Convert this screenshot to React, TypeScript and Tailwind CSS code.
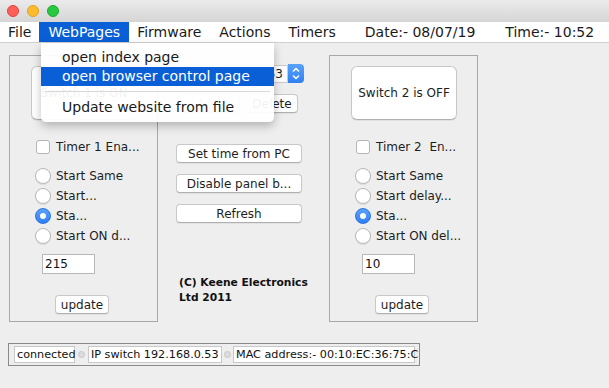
import React from 'react';

const font = { fontFamily: '"DejaVu Sans", "Noto Sans", sans-serif' };

const Radio = ({ checked, label }: { checked?: boolean; label: string }) => (
  <div className="flex items-center h-[20px]">
    {checked ? (
      <span className="w-[16px] h-[16px] rounded-full bg-gradient-to-b from-[#5aa2f8] to-[#2f7ff3] border border-[#2a73e0] flex items-center justify-center">
        <span className="w-[6px] h-[6px] rounded-full bg-white" />
      </span>
    ) : (
      <span className="w-[16px] h-[16px] rounded-full bg-white border border-[#b8b8b8] shadow-[0_1px_1px_rgba(0,0,0,0.08)]" />
    )}
    <span className="ml-[5px] text-[12px] text-[#1e1e1e]">{label}</span>
  </div>
);

const Btn = ({ children, className }: { children: React.ReactNode; className?: string }) => (
  <div
    className={`bg-white border border-[#c8c8c8] border-b-[#b0b0b0] rounded-[4px] shadow-[0_1px_1px_rgba(0,0,0,0.06)] flex items-center justify-center text-[12px] text-[#1e1e1e] whitespace-nowrap ${className ?? ''}`}
  >
    {children}
  </div>
);

const Panel = ({
  sw,
  timer,
  radios,
  value,
}: {
  sw: string;
  timer: string;
  radios: string[];
  value: string;
}) => (
  <div className="w-[149px] h-[267px] border border-[#a8a8a8] flex flex-col">
    <Btn className="ml-[21px] mt-[10px] w-[106px] h-[54px] rounded-[6px] text-[12.5px]">{sw}</Btn>
    <div className="flex items-center ml-[26px] mt-[20px] h-[14px]">
      <span className="w-[14px] h-[14px] bg-white border border-[#b5b5b5] rounded-[3px]" />
      <span className="ml-[6px] text-[12px] text-[#1e1e1e] whitespace-pre">{timer}</span>
    </div>
    <div className="ml-[25px] mt-[12px] flex flex-col">
      <Radio label={radios[0]} />
      <Radio label={radios[1]} />
      <Radio checked label={radios[2]} />
      <Radio label={radios[3]} />
    </div>
    <div className="ml-[32px] mt-[8px] w-[53px] h-[20px] bg-white border border-[#b8b8b8] text-[12px] leading-[18px] pl-[2px] text-[#111]">
      {value}
    </div>
    <Btn className="ml-[45px] mt-[21px] w-[54px] h-[19px]">update</Btn>
  </div>
);

const App = () => {
  return (
    <div className="w-[609px] h-[388px] bg-[#eeeeee] relative overflow-hidden" style={font}>
      {/* title bar */}
      <div className="h-[22px] bg-gradient-to-b from-[#ebebeb] to-[#d5d5d5] flex items-center pl-[7px] gap-[8px]">
        <span className="w-[12px] h-[12px] rounded-full bg-[#fc5f57] border border-[#e0443e]" />
        <span className="w-[12px] h-[12px] rounded-full bg-[#fdbc2e] border border-[#dea123]" />
        <span className="w-[12px] h-[12px] rounded-full bg-[#28c840] border border-[#1aab29]" />
      </div>

      {/* menu bar */}
      <div className="h-[21px] bg-white border-b border-[#d0d0d0] flex items-center text-[14px] text-[#1a1a1a]">
        <span className="pl-[8px] pr-[8px]">File</span>
        <span className="px-[9px] h-full flex items-center bg-[#0a5fd6] text-white">WebPages</span>
        <span className="pl-[8px] pr-[9px]">Firmware</span>
        <span className="px-[9px]">Actions</span>
        <span className="px-[9px]">Timers</span>
        <span className="ml-[20px]">Date:- 08/07/19</span>
        <span className="ml-[30px]">Time:- 10:52</span>
      </div>

      {/* main content */}
      <div className="flex pl-[9px] pt-[12px]">
        <Panel
          sw="Switch 1 is ON"
          timer="Timer 1 Ena..."
          radios={['Start Same', 'Start...', 'Sta...', 'Start ON d...']}
          value="215"
        />

        <div className="w-[171px] flex flex-col">
          <div className="ml-[18px] mt-[9px] flex items-center h-[19px]">
            <div className="w-[112px] h-[18px] bg-white border border-[#c8c8c8] rounded-l-[4px] text-[12px] leading-[16px] pr-[4px] text-right text-[#1e1e1e] overflow-hidden whitespace-nowrap">
              192.168.0.53
            </div>
            <div className="w-[16px] h-[19px] rounded-r-[4px] bg-gradient-to-b from-[#5aa2f8] to-[#2f7ff3] flex items-center justify-center">
              <svg width="8" height="13" viewBox="0 0 8 13" fill="none" stroke="white" strokeWidth="1.5">
                <path d="M1 4.5 L4 1.5 L7 4.5" />
                <path d="M1 8.5 L4 11.5 L7 8.5" />
              </svg>
            </div>
          </div>
          <div className="flex mt-[11px] ml-[20px] gap-[7px]">
            <Btn className="w-[61px] h-[19px] text-[#a0a0a0]">Add</Btn>
            <Btn className="w-[52px] h-[19px]">Delete</Btn>
          </div>
          <div className="ml-[18px] mt-[31px] flex flex-col gap-[11px]">
            <Btn className="w-[126px] h-[19px]">Set time from PC</Btn>
            <Btn className="w-[126px] h-[19px]">Disable panel b...</Btn>
            <Btn className="w-[126px] h-[19px]">Refresh</Btn>
          </div>
          <div className="ml-[21px] mt-[52px] text-[10.7px] font-bold leading-[15px] text-[#111]">
            (C) Keene Electronics
            <br />
            Ltd 2011
          </div>
        </div>

        <Panel
          sw="Switch 2 is OFF"
          timer="Timer 2  En..."
          radios={['Start Same', 'Start delay...', 'Sta...', 'Start ON del...']}
          value="10"
        />
      </div>

      {/* status bar */}
      <div className="ml-[8px] mt-[21px] w-[412px] h-[23px] border border-[#8a8a8a] flex items-center pl-[5px] text-[11.2px] text-[#111]">
        <div className="h-[17px] w-[61px] bg-white border border-[#c8c8c8] leading-[15px] pl-[2px] whitespace-nowrap">connected</div>
        <span className="mx-[3px] w-[7px] h-[7px] rounded-full bg-[#dcdcdc] border border-[#c8c8c8]" />
        <div className="h-[17px] w-[134px] bg-white border border-[#c8c8c8] leading-[15px] pl-[2px] whitespace-nowrap">
          IP switch 192.168.0.53
        </div>
        <span className="mx-[2px] w-[7px] h-[7px] rounded-full bg-[#dcdcdc] border border-[#c8c8c8]" />
        <div className="h-[17px] w-[182px] bg-white border border-[#c8c8c8] leading-[15px] pl-[2px] whitespace-nowrap">
          MAC address:- 00:10:EC:36:75:C
        </div>
      </div>

      {/* open WebPages menu */}
      <div className="absolute left-[41px] top-[43px] w-[233px] h-[79px] bg-white/[0.94] rounded-b-[5px] shadow-[0_4px_10px_rgba(0,0,0,0.25)] text-[14px] text-[#1a1a1a] pt-[4px]">
        <div className="h-[20px] pl-[21px] leading-[20px]">open index page</div>
        <div className="h-[19px] pl-[21px] leading-[19px] bg-[#0a5fd6] text-white">open browser control page</div>
        <div className="mx-[4px] my-[5px] border-t border-[#d8d8d8]" />
        <div className="h-[20px] pl-[21px] leading-[20px]">Update website from file</div>
      </div>
    </div>
  );
};

export default App;
